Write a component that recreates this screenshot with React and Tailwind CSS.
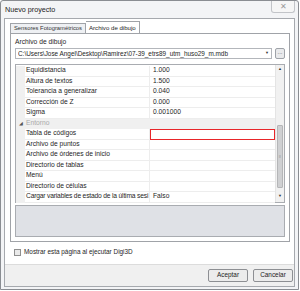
import React from "react"

const font = { fontFamily: '"Liberation Sans", Arial, sans-serif' }

const rows = [
  { name: "Equidistancia", value: "1.000" },
  { name: "Altura de textos", value: "1.500" },
  { name: "Tolerancia a generalizar", value: "0.040" },
  { name: "Corrección de Z", value: "0.000" },
  { name: "Sigma", value: "0.001000" },
  { category: "Entorno" },
  { name: "Tabla de códigos", value: "", marked: true },
  { name: "Archivo de puntos", value: "" },
  { name: "Archivo de órdenes de inicio", value: "" },
  { name: "Directorio de tablas", value: "" },
  { name: "Menú", value: "" },
  { name: "Directorio de células", value: "" },
  { name: "Cargar variables de estado de la última sesi", value: "Falso", tight: true },
]

function GridRow({ row }) {
  if (row.category) {
    return (
      <div className="flex h-[10.5px] bg-[#f0f0f0] items-center">
        <div className="w-[9px] flex justify-center text-[5px] text-[#555]">◢</div>
        <span className="text-[#a9a9a9] pl-[1px]">{row.category}</span>
      </div>
    )
  }
  return (
    <div className="flex h-[10.5px]">
      <div className="w-[9px] bg-[#f0f0f0]" />
      <div className={`w-[125px] pl-[1px] border-b border-r border-[#ededed] flex items-center overflow-hidden whitespace-nowrap ${row.tight ? "tracking-[-0.18px]" : ""}`}>
        {row.name}
      </div>
      <div className={`flex-1 pl-[3px] flex items-center border-b ${row.marked ? "border border-[#e8262a]" : "border-[#ededed]"}`}>
        {row.value}
      </div>
    </div>
  )
}

export default function App() {
  return (
    <div style={font} className="w-[300px] h-[291px] bg-white text-[#1e1e1e] text-[6.7px] leading-none">
      <div className="w-[299px] h-[290px] border border-[#8a8d92] rounded-t-[3px] bg-[#f3f4f6] flex flex-col px-[3px] pb-[2px]">
        {/* Title bar */}
        <div className="h-[17px] flex items-start justify-between">
          <span className="pt-[5px] pl-[1px] text-[7.2px] text-[#222]">Nuevo proyecto</span>
          <div className="w-[24px] h-[12px] border border-t-0 border-[#c2c4c8] rounded-b-[3px] bg-[#f6f6f6] flex items-center justify-center text-[8px] text-[#9a9a9a]">
            ✕
          </div>
        </div>

        {/* Client area */}
        <div className="flex-1 border border-[#a6a9ae] bg-white flex flex-col">
          <div className="flex-1 flex flex-col pl-[5px] pr-[4px] pt-[1px]">
            {/* Tabs */}
            <div className="flex items-end h-[13px]">
              <div className="h-[10px] px-[3px] border border-b-0 border-[#a0a3a8] bg-[#eef0f3] flex items-center text-[5.8px] text-[#333]">
                Sensores Fotogramétricos
              </div>
              <div className="h-[13px] px-[3px] -mb-[1px] border border-b-0 border-l-0 border-[#a0a3a8] bg-white flex items-center text-[6.1px]">
                Archivo de dibujo
              </div>
            </div>
            {/* Panel */}
            <div className="border border-[#a0a3a8] h-[209px] pl-[4px] pr-[4px] flex flex-col">
              <div className="pt-[5px] h-[13px] text-[6.7px]">Archivo de dibujo</div>
              <div className="flex items-center gap-[3px] h-[12px]">
                <div className="flex-1 h-[11px] border border-[#b3b6bb] flex items-center pl-[2px] pr-[2px]">
                  <span className="flex-1 whitespace-nowrap overflow-hidden leading-[9px] text-[6.4px]">C:\Users\Jose Angel\Desktop\Ramirez\07-39_etrs89_utm_huso29_m.mdb</span>
                  <span className="text-[4px] text-[#333]">▼</span>
                </div>
                <div className="w-[10px] h-[11px] border border-[#9ea2a8] rounded-[2px] bg-[#e9eaec] flex items-center justify-center text-[6px] text-[#555] pb-[2px]">...</div>
              </div>
              {/* Property grid */}
              <div className="mt-[5px] h-[139px] border border-[#a9acb1] flex">
                <div className="flex-1 pt-[1px]">
                  {rows.map((r, i) => (
                    <GridRow key={i} row={r} />
                  ))}
                </div>
                <div className="w-[9px] bg-[#f1f1f1] border-l border-[#e4e4e4] flex flex-col items-center">
                  <span className="text-[4px] text-[#333] pt-[2px] h-[8px]">▲</span>
                  <div className="flex-1 w-full relative">
                    <div className="absolute left-[1px] right-[1px] top-[52px] h-[63px] bg-[#cfd0d2] border border-[#b5b6b8] rounded-[1px] flex items-center justify-center text-[4px] text-[#777]">≡</div>
                  </div>
                  <span className="text-[4px] text-[#333] pb-[2px] h-[8px]">▼</span>
                </div>
              </div>
              {/* Description */}
              <div className="mt-[2px] h-[32px] border border-[#a9acb1] bg-[#dfe1e6]" />
            </div>
            {/* Checkbox */}
            <div className="flex items-center gap-[3px] mt-[7px] pl-[4px]">
              <div className="w-[7px] h-[7px] border border-[#8f8f8f] bg-[#eaeaea]" />
              <span className="text-[6.4px]">Mostrar esta página al ejecutar Digi3D</span>
            </div>
          </div>
          {/* Button strip */}
          <div className="h-[22px] border-t border-[#dcdcdc] bg-[#f0f0f0] flex items-center justify-end gap-[5px] pr-[1px]">
            <button className="w-[40px] h-[13px] border border-[#8d8f93] rounded-[2px] bg-[#ececec] text-[6.4px] text-[#222]">Aceptar</button>
            <button className="w-[40px] h-[13px] border border-[#8d8f93] rounded-[2px] bg-[#ececec] text-[6.4px] text-[#222]">Cancelar</button>
          </div>
        </div>
      </div>
    </div>
  )
}
